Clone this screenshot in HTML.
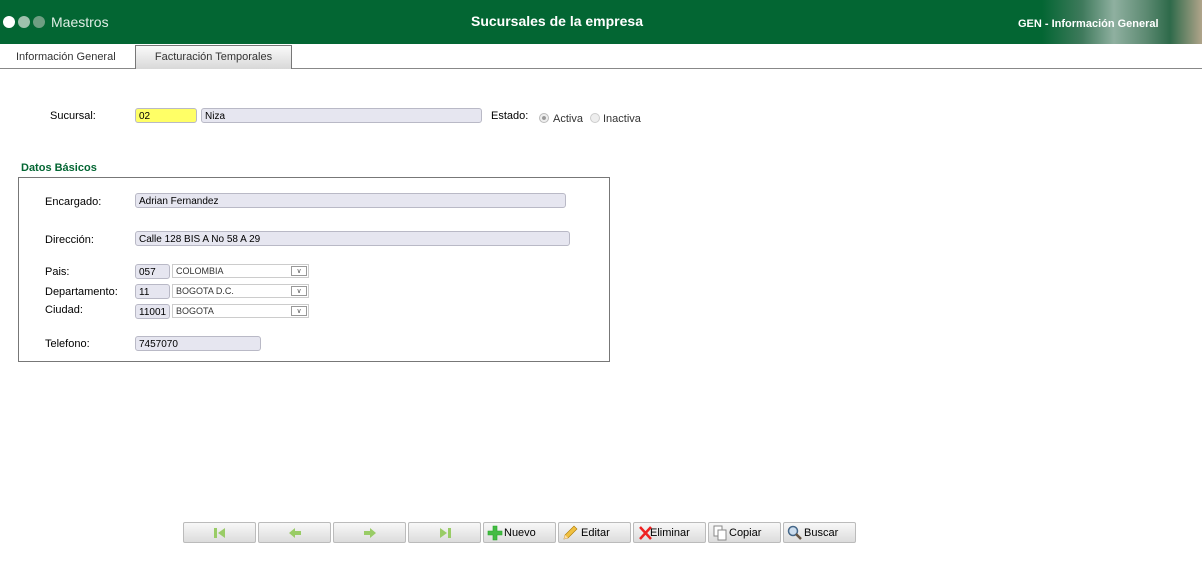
<!DOCTYPE html>
<html><head><meta charset="utf-8"><style>
*{box-sizing:border-box;margin:0;padding:0}
body{width:1202px;height:569px;background:#fff;font-family:"Liberation Sans",sans-serif;position:relative;overflow:hidden;font-size:11px;color:#000}
.abs{position:absolute}
#hdr{left:0;top:0;width:1202px;height:44px;background:#036633}
#hdr .right{right:0;top:0;width:160px;height:44px;background:linear-gradient(90deg,#036633 0%,#3f7a5c 25%,#8fb0a0 45%,#5d8a72 65%,#2e6a4a 80%,#b0a48a 100%)}
.dot{top:16px;width:12px;height:12px;border-radius:50%}
.inp{position:absolute;height:15px;border:1px solid #b9b9c6;border-radius:3px;background:#e6e6f0;font-size:10px;padding:3px 3px 0;line-height:10px}
.sel{position:absolute;height:14px;border:1px solid #ccc;background:#fff;font-size:9px;color:#333;padding:1px 3px;line-height:11px}
.sel .ar{position:absolute;right:1px;top:1px;width:16px;height:10px;border:1px solid #999;font-size:7px;text-align:center;line-height:9px;color:#555}
.lbl{position:absolute;font-size:11px;margin-top:1px}
.btn{position:absolute;top:522px;height:21px;border:1px solid #bbb;border-radius:2px;background:linear-gradient(#f8f8f8,#dcdcdc);font-size:11px;line-height:21px}
</style></head><body>
<div id="hdr" class="abs">
 <div class="abs right"></div>
 <div class="abs dot" style="left:3px;background:#fff"></div>
 <div class="abs dot" style="left:18px;background:#9fc1ad"></div>
 <div class="abs dot" style="left:33px;background:#6e9e82"></div>
 <div class="abs" style="left:51px;top:14px;color:#dfeee5;font-size:14px">Maestros</div>
 <div class="abs" style="left:471px;top:13px;color:#fff;font-size:14px;font-weight:bold">Sucursales de la empresa</div>
 <div class="abs" style="left:1018px;top:18px;color:#fff;font-size:11px;font-weight:bold">GEN - Información General</div>
</div>
<div class="abs" style="left:0;top:68px;width:1202px;height:1px;background:#888"></div>
<div class="abs" style="left:16px;top:51px;font-size:11px;color:#333">Información General</div>
<div class="abs" style="left:135px;top:45px;width:157px;height:24px;border:1px solid #777;border-bottom:none;background:linear-gradient(#fafafa,#d8d8d8);font-size:11px;color:#333;text-align:center;line-height:22px">Facturación Temporales</div>

<div class="lbl" style="left:50px;top:109px">Sucursal:</div>
<div class="inp" style="left:135px;top:108px;width:62px;background:#ffff66">02</div>
<div class="inp" style="left:201px;top:108px;width:281px">Niza</div>
<div class="lbl" style="left:491px;top:109px">Estado:</div>
<div class="abs" style="left:539px;top:113px;width:10px;height:10px;border-radius:50%;border:1px solid #bbb;background:radial-gradient(#999 30%,#eee 40%)"></div>
<div class="lbl" style="left:553px;top:112px;color:#333">Activa</div>
<div class="abs" style="left:590px;top:113px;width:10px;height:10px;border-radius:50%;border:1px solid #ccc;background:#eee"></div>
<div class="lbl" style="left:603px;top:112px;color:#333">Inactiva</div>

<div class="abs" style="left:21px;top:162px;color:#036633;font-weight:bold;font-size:11px">Datos Básicos</div>
<div class="abs" style="left:18px;top:177px;width:592px;height:185px;border:1px solid #777"></div>
<div class="lbl" style="left:45px;top:195px">Encargado:</div>
<div class="inp" style="left:135px;top:193px;width:431px">Adrian Fernandez</div>
<div class="lbl" style="left:45px;top:233px">Dirección:</div>
<div class="inp" style="left:135px;top:231px;width:435px">Calle 128 BIS A No 58 A 29</div>
<div class="lbl" style="left:45px;top:265px">Pais:</div>
<div class="inp" style="left:135px;top:264px;width:35px">057</div>
<div class="sel" style="left:172px;top:264px;width:137px">COLOMBIA<div class="ar">&#8744;</div></div>
<div class="lbl" style="left:45px;top:285px">Departamento:</div>
<div class="inp" style="left:135px;top:284px;width:35px">11</div>
<div class="sel" style="left:172px;top:284px;width:137px">BOGOTA D.C.<div class="ar">&#8744;</div></div>
<div class="lbl" style="left:45px;top:303px">Ciudad:</div>
<div class="inp" style="left:135px;top:304px;width:35px">11001</div>
<div class="sel" style="left:172px;top:304px;width:137px">BOGOTA<div class="ar">&#8744;</div></div>
<div class="lbl" style="left:45px;top:337px">Telefono:</div>
<div class="inp" style="left:135px;top:336px;width:126px">7457070</div>

<div class="btn" style="left:183px;width:73px"><svg class="abs" style="left:29px;top:4px" width="14" height="12"><rect x="1" y="1" width="3" height="10" fill="#9c6"/><path d="M12 1L5 6L12 11Z" fill="#9c6"/></svg></div>
<div class="btn" style="left:258px;width:73px"><svg class="abs" style="left:29px;top:4px" width="14" height="12"><path d="M1 6L7 1V4H13V8H7V11Z" fill="#9c6"/></svg></div>
<div class="btn" style="left:333px;width:73px"><svg class="abs" style="left:29px;top:4px" width="14" height="12"><path d="M13 6L7 1V4H1V8H7V11Z" fill="#9c6"/></svg></div>
<div class="btn" style="left:408px;width:73px"><svg class="abs" style="left:29px;top:4px" width="14" height="12"><path d="M2 1L9 6L2 11Z" fill="#9c6"/><rect x="10" y="1" width="3" height="10" fill="#9c6"/></svg></div>
<div class="btn" style="left:483px;width:73px"><svg class="abs" style="left:3px;top:2px" width="16" height="16"><path d="M6 1H10V6H15V10H10V15H6V10H1V6H6Z" fill="#4b4" stroke="#2a2" stroke-width=".6"/></svg><span class="abs" style="left:20px">Nuevo</span></div>
<div class="btn" style="left:558px;width:73px"><svg class="abs" style="left:3px;top:2px" width="16" height="16"><path d="M2 14L3 10L12 1L15 4L6 13Z" fill="#f0c040" stroke="#a70" stroke-width=".6"/><path d="M2 14L3 10L6 13Z" fill="#fda"/></svg><span class="abs" style="left:22px">Editar</span></div>
<div class="btn" style="left:633px;width:73px"><svg class="abs" style="left:3px;top:2px" width="16" height="16"><path d="M3 2L14 14M14 2L3 14" stroke="#e22" stroke-width="2.5"/></svg><span class="abs" style="left:16px">Eliminar</span></div>
<div class="btn" style="left:708px;width:73px"><svg class="abs" style="left:3px;top:2px" width="16" height="16"><rect x="2" y="1" width="8" height="10" fill="#fff" stroke="#888"/><rect x="6" y="5" width="8" height="10" fill="#fff" stroke="#888"/></svg><span class="abs" style="left:20px">Copiar</span></div>
<div class="btn" style="left:783px;width:73px"><svg class="abs" style="left:3px;top:2px" width="16" height="16"><circle cx="6" cy="6" r="4.5" fill="#cde" stroke="#468" stroke-width="1.5"/><path d="M9 9L14 14" stroke="#654" stroke-width="2.5"/></svg><span class="abs" style="left:20px">Buscar</span></div>
</body></html>
